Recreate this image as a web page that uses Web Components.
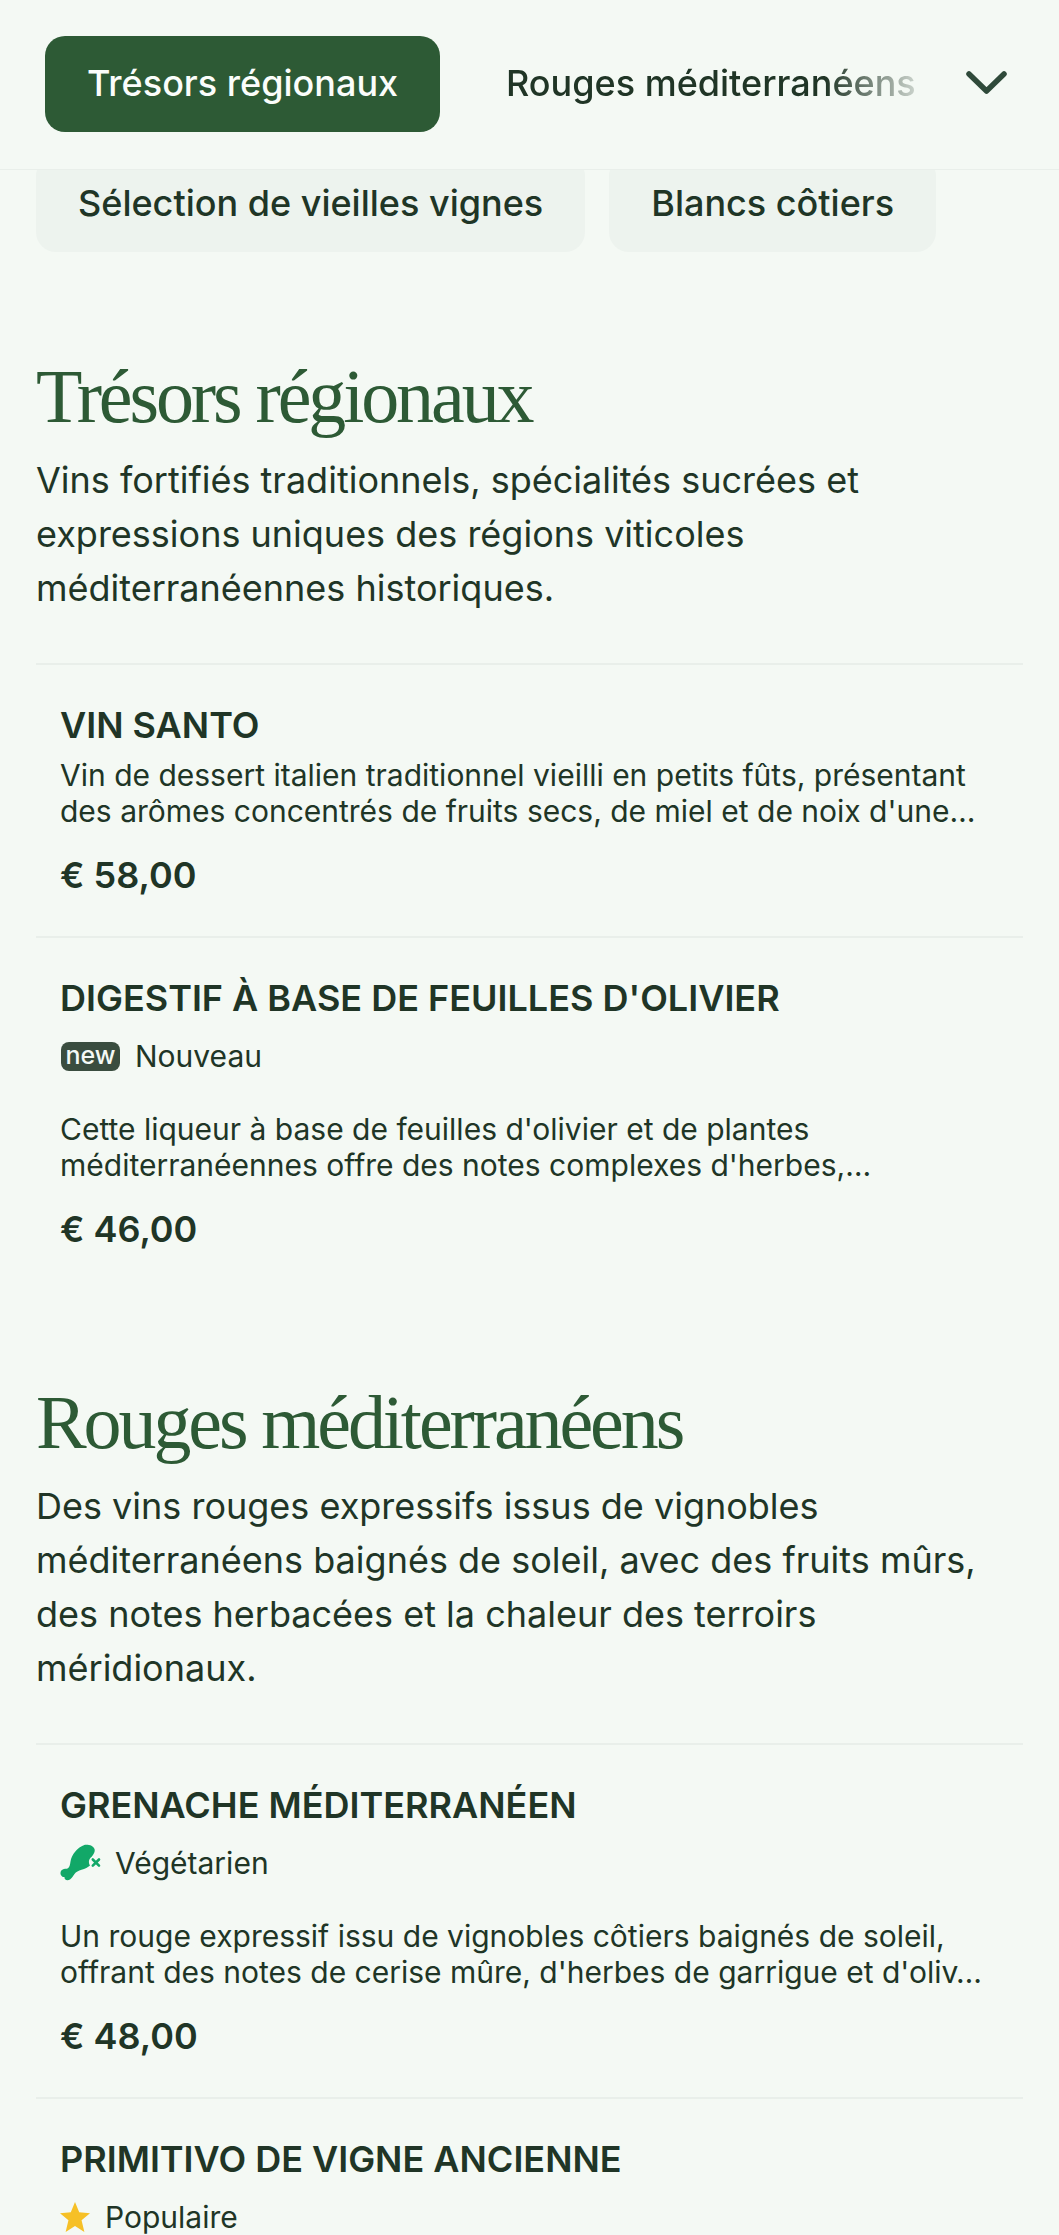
<!DOCTYPE html>
<html lang="fr"><head><meta charset="utf-8"><title>Carte</title>
<style>
html,body{margin:0;padding:0;background:#f4f9f4;}
body{height:2235px;overflow:hidden;font-family:Inter,"Liberation Sans",sans-serif;color:#203526;}
</style></head><body>
<app-tabs></app-tabs>
<chip-row></chip-row>
<menu-section heading="Trésors régionaux" style="margin-top:100px">
  <span slot="intro">Vins fortifiés traditionnels, spécialités sucrées et expressions uniques des régions viticoles méditerranéennes historiques.</span>
  <menu-item name="VIN SANTO" price="€ 58,00">Vin de dessert italien traditionnel vieilli en petits fûts, présentant des arômes concentrés de fruits secs, de miel et de noix d'une…</menu-item>
  <menu-item name="DIGESTIF À BASE DE FEUILLES D'OLIVIER" price="€ 46,00" tag="new" label="Nouveau">Cette liqueur à base de feuilles d'olivier et de plantes méditerranéennes offre des notes complexes d'herbes,…</menu-item>
</menu-section>
<menu-section heading="Rouges méditerranéens" style="margin-top:88px">
  <span slot="intro">Des vins rouges expressifs issus de vignobles méditerranéens baignés de soleil, avec des fruits mûrs, des notes herbacées et la chaleur des terroirs méridionaux.</span>
  <menu-item name="GRENACHE MÉDITERRANÉEN" price="€ 48,00" tag="veg" label="Végétarien">Un rouge expressif issu de vignobles côtiers baignés de soleil, offrant des notes de cerise mûre, d'herbes de garrigue et d'oliv…</menu-item>
  <menu-item name="PRIMITIVO DE VIGNE ANCIENNE" tag="star" label="Populaire" last></menu-item>
</menu-section>
<script>
class AppTabs extends HTMLElement{
  constructor(){super();this.attachShadow({mode:'open'}).innerHTML=`<style>
  :host{display:flex;align-items:center;box-sizing:border-box;height:170px;padding:0 51px 1px 45px;border-bottom:1px solid #e9efea;background:#f4f9f4;position:relative;z-index:2;}
  .active{flex:none;box-sizing:border-box;height:96px;width:395px;display:flex;align-items:center;justify-content:center;padding-bottom:3px;border-radius:20px;background:#2d5a35;color:#fbfdfb;font-size:36px;font-weight:500;white-space:nowrap;}
  .fade{flex:1;min-width:0;margin-left:66px;padding-bottom:3px;overflow:hidden;white-space:nowrap;font-size:36px;font-weight:500;color:#203526;-webkit-mask-image:linear-gradient(90deg,#000 78%,rgba(0,0,0,.2) 100%);mask-image:linear-gradient(90deg,#000 78%,rgba(0,0,0,.2) 100%);}
  svg{flex:none;margin-left:51px;display:block;}
  </style><div class="active">Trésors régionaux</div><div class="fade">Rouges méditerranéens</div>
  <svg width="42" height="26" viewBox="0 0 42 26" fill="none"><path d="M3 3 L20.5 20 L38 3" stroke="#2f4a3a" stroke-width="5.5" stroke-linecap="round" stroke-linejoin="round"/></svg>`;}
}
customElements.define('app-tabs',AppTabs);
class ChipRow extends HTMLElement{
  constructor(){super();this.attachShadow({mode:'open'}).innerHTML=`<style>
  :host{display:flex;gap:24px;align-items:flex-end;height:82px;overflow:hidden;padding:0 36px;}
  div{flex:none;box-sizing:border-box;height:96px;display:flex;align-items:center;padding:0 42px 2px;border-radius:20px;background:#edf3ee;font-size:36px;font-weight:500;color:#203526;white-space:nowrap;}
  </style><div>Sélection de vieilles vignes</div><div>Blancs côtiers</div>`;}
}
customElements.define('chip-row',ChipRow);
class MenuSection extends HTMLElement{
  constructor(){super();this.attachShadow({mode:'open'}).innerHTML=`<style>
  :host{display:block;padding:0 36px;}
  h2{margin:0;font:400 76px/88px "Liberation Serif",serif;letter-spacing:-3.1px;color:#2d5a35;}
  p{margin:13px 0 0;font-size:36px;line-height:54px;color:#203526;}
  .list{margin-top:48px;display:flex;flex-direction:column;}
  </style><h2></h2><p><slot name="intro"></slot></p><div class="list"><slot></slot></div>`;
  this.shadowRoot.querySelector('h2').textContent=this.getAttribute('heading');}
}
customElements.define('menu-section',MenuSection);
const ICONS={
 new:`<span class="new">new</span>`,
 veg:`<svg width="40" height="38" viewBox="0 0 40 38" style="overflow:visible"><path fill="#12a868" d="M25 .8 C29.500 .5 33.500 2 34.500 5 C35.500 8 33 11 31.700 12.800 C29 15 28 18 30 21.500 C28 23.500 25 24.800 21.500 25.800 C18.500 26.800 16 28 14.500 30 C13 32 12 34 10 35.500 C7 37.500 4 35.500 4.500 33 C1.500 33.500 -.5 30 1 27 C2.500 24.500 5.500 25 7.500 24.500 C9.500 23.500 10 21 10.500 17.500 C11.500 11 17 3.500 25 .8Z"/><path d="M32.800 15.500 L39 21.700 M39 15.500 L32.800 21.700" stroke="#12a868" stroke-width="2.600" stroke-linecap="round"/></svg>`,
 star:`<svg width="30" height="30" viewBox="0 0 32 32"><path fill="#f6c026" d="M16 0 L20.500 11 L32 12 L23 19.500 L26 32 L16 25.500 L6 32 L9 19.500 L0 12 L11.500 11 Z"/></svg>`
};
class MenuItem extends HTMLElement{
  constructor(){super();const t=this.getAttribute('tag');const last=this.hasAttribute('last');this.attachShadow({mode:'open'}).innerHTML=`<style>
  :host{display:block;box-sizing:border-box;border-top:2px solid #e9efea;padding:38px 24px 39px;}
  :host([last]){padding-bottom:0;}
  h3{margin:0;font-size:36px;line-height:44px;font-weight:600;color:#203526;}
  .tag{display:flex;align-items:center;gap:15px;margin-top:14px;height:44px;font-size:30px;color:#203526;margin-bottom:33px;}
  :host([last]) .tag{height:36px;margin-top:18px;margin-bottom:0;}
  .new{display:flex;align-items:center;justify-content:center;box-sizing:border-box;width:59px;margin-left:1px;height:29px;padding-bottom:2px;background:#3a4d3f;color:#f4f9f5;font-size:25px;font-weight:500;line-height:27px;border-radius:8px;}
  svg{display:block;flex:none;}
  .d{margin:10px 0 0;font-size:30px;line-height:36px;color:#203526;}
  .p{margin-top:24px;font-size:36px;line-height:44px;font-weight:600;color:#203526;}
  </style><h3>${this.getAttribute('name')}</h3>${t?`<div class="tag">${ICONS[t]}<span>${this.getAttribute('label')}</span></div>`:''}${last?'':`<div class="d"><slot></slot></div><div class="p">${this.getAttribute('price')}</div>`}`;}
}
customElements.define('menu-item',MenuItem);
</script>
</body></html>
